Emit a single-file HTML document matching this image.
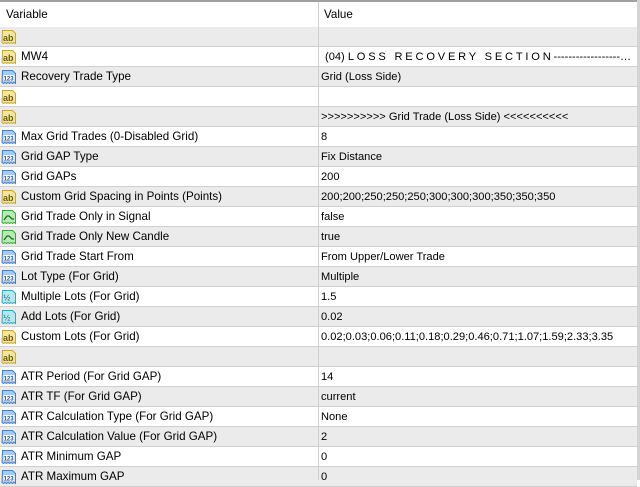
<!DOCTYPE html>
<html><head><meta charset="utf-8"><style>
html,body{margin:0;padding:0;background:#fff;}
body{width:640px;height:480px;overflow:hidden;position:relative;font-family:"Liberation Sans",Arial,sans-serif;font-size:11.6px;color:#000;}
.top{position:absolute;left:0;top:0;width:640px;height:2px;background:#a0a0a0;}
.rb{position:absolute;right:0;top:0;width:3px;height:480px;background:#d4d4d4;}
.hdr{position:absolute;top:2px;left:0;width:637px;height:24px;background:#fff;}
.hdr span{position:absolute;top:6px;}
.row{position:absolute;left:0;width:637px;height:19px;border-bottom:1px solid #d0d0d0;}
.g{background:#ebebeb;}
.row .ic{position:absolute;left:1px;top:2px;width:16px;height:16px;}
.row .n{position:absolute;left:21px;top:3px;white-space:nowrap;}
.row .v{position:absolute;left:321px;top:3.5px;white-space:nowrap;font-size:11.1px;width:312px;overflow:hidden;text-overflow:ellipsis;}
.div{position:absolute;left:318px;top:2px;width:1px;height:478px;background:#d0d0d0;}
.sp{letter-spacing:2.8px;}
</style></head><body>
<div class="top"></div>
<div class="hdr"><span style="left:6px">Variable</span><span style="left:324px">Value</span></div>
<div id="rows"></div>
<div class="div"></div>
<div class="rb"></div>
<svg width="0" height="0" style="position:absolute">
<defs>
<symbol id="ab" viewBox="0 0 16 16"><path d="M1.5 1.5h10l3 3v10l-1.5-1-1.5 1-1.5-1-1.5 1-1.5-1-1.5 1-1.5-1-1.5 1-1.5-1z" fill="#f3e7a0" stroke="#c2a83c"/><text x="2" y="12" font-family="Liberation Sans" font-size="9" font-weight="bold" fill="#6b5a10">ab</text></symbol>
<symbol id="n" viewBox="0 0 16 16"><path d="M1.5 1.5h10l3 3v10l-1.5-1-1.5 1-1.5-1-1.5 1-1.5-1-1.5 1-1.5-1-1.5 1-1.5-1z" fill="#a9c9ee" stroke="#4a7fc0"/><rect x="2.5" y="6" width="11" height="6" fill="#fff"/><text x="2.6" y="11.3" font-family="Liberation Sans" font-size="6" font-weight="bold" fill="#1e4f9a">123</text></symbol>
<symbol id="b" viewBox="0 0 16 16"><path d="M1.5 1.5h10l3 3v10l-1.5-1-1.5 1-1.5-1-1.5 1-1.5-1-1.5 1-1.5-1-1.5 1-1.5-1z" fill="#b8eab8" stroke="#3ea33e"/><path d="M3 11l3-4h2l3 3h2" fill="none" stroke="#1d6e1d" stroke-width="1.3"/></symbol>
<symbol id="h" viewBox="0 0 16 16"><path d="M1.5 1.5h10l3 3v10l-1.5-1-1.5 1-1.5-1-1.5 1-1.5-1-1.5 1-1.5-1-1.5 1-1.5-1z" fill="#b4e8ee" stroke="#3aa3b8"/><text x="2.5" y="11.5" font-family="Liberation Sans" font-size="8" fill="#1f6d80">½</text></symbol>
</defs></svg>
<script>
var R=[
["ab","",""],["ab","MW4","(04) <span class='sp'>LOSS RECOVERY SECTION</span>-------------------------------------------"],
["n","Recovery Trade Type","Grid (Loss Side)"],["ab","",""],
["ab","","&gt;&gt;&gt;&gt;&gt;&gt;&gt;&gt;&gt;&gt; Grid Trade (Loss Side) &lt;&lt;&lt;&lt;&lt;&lt;&lt;&lt;&lt;&lt;"],
["n","Max Grid Trades (0-Disabled Grid)","8"],["n","Grid GAP Type","Fix Distance"],["n","Grid GAPs","200"],
["ab","Custom Grid Spacing in Points (Points)","200;200;250;250;250;300;300;300;350;350;350"],
["b","Grid Trade Only in Signal","false"],["b","Grid Trade Only New Candle","true"],
["n","Grid Trade Start From","From Upper/Lower Trade"],["n","Lot Type (For Grid)","Multiple"],
["h","Multiple Lots (For Grid)","1.5"],["h","Add Lots (For Grid)","0.02"],
["ab","Custom Lots (For Grid)","0.02;0.03;0.06;0.11;0.18;0.29;0.46;0.71;1.07;1.59;2.33;3.35"],
["ab","",""],["n","ATR Period (For Grid GAP)","14"],["n","ATR TF (For Grid GAP)","current"],
["n","ATR Calculation Type (For Grid GAP)","None"],["n","ATR Calculation Value (For Grid GAP)","2"],
["n","ATR Minimum GAP","0"],["n","ATR Maximum GAP","0"]];
var h="";
for(var i=0;i<R.length;i++){var r=R[i];
h+='<div class="row'+(i%2==0?' g':'')+'" style="top:'+(27+20*i)+'px"><svg class="ic"><use href="#'+r[0]+'"/></svg><span class="n">'+r[1]+'</span><span class="v"'+(i==1?' style="left:325px;width:308px"':'')+'>'+r[2]+'</span></div>';}
document.getElementById("rows").innerHTML=h;
</script>
</body></html>
